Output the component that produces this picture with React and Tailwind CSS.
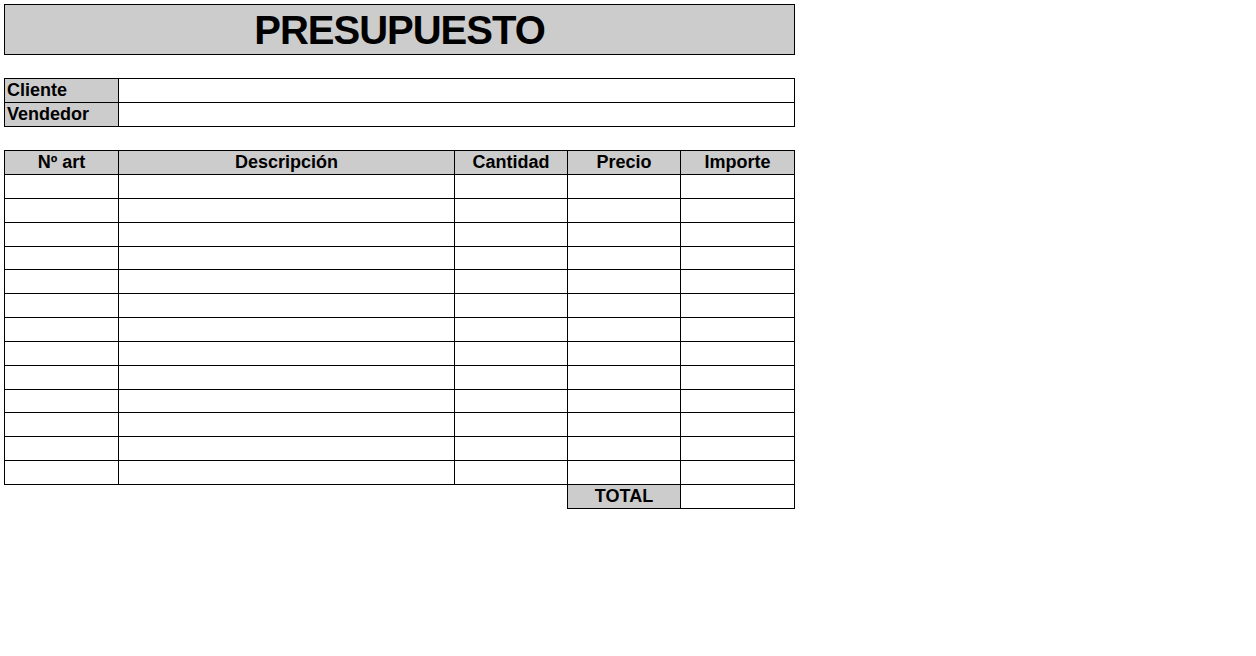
const font = { fontFamily: '"Liberation Sans", Arial, sans-serif' };

const cols = ["Nº art", "Descripción", "Cantidad", "Precio", "Importe"];
// spreadsheet rows aren't all equal height
const rowHeights = ["h-[24px]", "h-[24px]", "h-[24px]", "h-[23px]", "h-[24px]", "h-[24px]", "h-[24px]", "h-[24px]", "h-[24px]", "h-[23px]", "h-[24px]", "h-[24px]", "h-[24px]"];

export default function App() {
  return (
    <div className="min-h-screen w-full bg-white pl-[4px] pt-[4px] text-black" style={font}>
      <div className="w-[791px]">
        <div className="flex h-[51px] items-center justify-center border border-black bg-[#cccccc] text-[40px] font-bold leading-none tracking-[-1px]">
          PRESUPUESTO
        </div>

        <div className="mt-[23px] border-l border-t border-black text-[18px] font-bold leading-[23px]">
          {["Cliente", "Vendedor"].map((label) => (
            <div key={label} className="flex">
              <div className="h-[24px] w-[114px] border-b border-r border-black bg-[#cccccc] pl-[2px]">{label}</div>
              <div className="h-[24px] flex-1 border-b border-r border-black"></div>
            </div>
          ))}
        </div>

        <div className="mt-[23px] grid grid-cols-[114px_336px_113px_113px_114px] border-l border-t border-black text-[18px] font-bold leading-[23px]">
          {cols.map((c) => (
            <div key={c} className="h-[24px] border-b border-r border-black bg-[#cccccc] text-center">
              {c}
            </div>
          ))}
          {rowHeights.map((h, i) =>
            cols.map((c) => <div key={c + i} className={`${h} border-b border-r border-black`}></div>)
          )}
        </div>

        <div className="flex text-[18px] font-bold leading-[23px]">
          <div className="w-[563px]"></div>
          <div className="h-[24px] w-[114px] border-b border-l border-r border-black bg-[#cccccc] text-center">TOTAL</div>
          <div className="h-[24px] w-[114px] border-b border-r border-black"></div>
        </div>
      </div>
    </div>
  );
}
